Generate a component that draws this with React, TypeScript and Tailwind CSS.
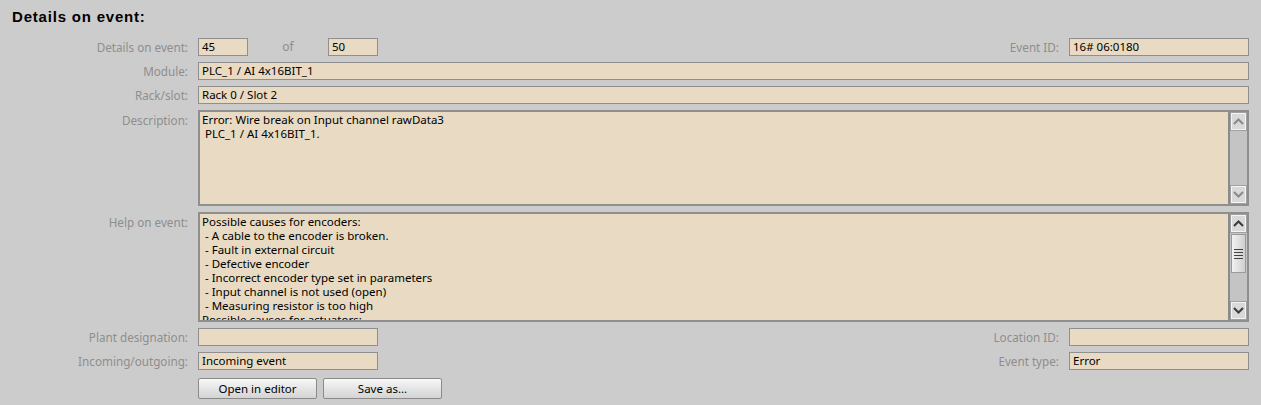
import React from "react";

const font = { fontFamily: '"Noto Sans", "Open Sans", sans-serif' };

function Label({ children, className = "" }: { children: React.ReactNode; className?: string }) {
  return (
    <div className={"text-[11.7px] leading-[18px] text-[#8e8e8e] text-right whitespace-nowrap " + className}>
      {children}
    </div>
  );
}

function Box({ children, className = "" }: { children?: React.ReactNode; className?: string }) {
  return (
    <div
      className={
        "h-[18px] border border-[#8f8f8f] bg-[#e8dac3] px-[3px] text-[11.5px] leading-[16px] text-black whitespace-nowrap overflow-hidden " +
        className
      }
    >
      {children}
    </div>
  );
}

function Chevron({ up, color }: { up: boolean; color: string }) {
  return (
    <svg width="11" height="7" viewBox="0 0 11 7">
      <path
        d={up ? "M1 6 L5.5 1.5 L10 6" : "M1 1 L5.5 5.5 L10 1"}
        fill="none"
        stroke={color}
        strokeWidth="2"
      />
    </svg>
  );
}

function SBtn({ up, disabled }: { up: boolean; disabled?: boolean }) {
  return (
    <div className="h-[17px] w-full shrink-0 border border-[#f4f4f4] bg-[#d9d9d9] flex items-center justify-center outline outline-1 outline-[#a0a0a0]">
      <Chevron up={up} color={disabled ? "#8a8a8a" : "#3c3c3c"} />
    </div>
  );
}

function Scrollbar({ thumb }: { thumb?: boolean }) {
  return (
    <div className="w-[19px] h-full border-l-2 border-[#8a8a8a] bg-[#c4c4c4] flex flex-col justify-between p-[1px]">
      <SBtn up disabled={!thumb} />
      {thumb ? (
        <div className="flex-1 flex flex-col mt-[2px] mb-[1px]">
          <div className="h-[39px] border border-[#9a9a9a] bg-gradient-to-r from-[#f2f2f2] to-[#cfcfcf] flex items-center justify-center">
            <div className="flex flex-col gap-[2px]">
              <div className="w-[9px] h-[1px] bg-[#404040]" />
              <div className="w-[9px] h-[1px] bg-[#404040]" />
              <div className="w-[9px] h-[1px] bg-[#404040]" />
              <div className="w-[9px] h-[1px] bg-[#404040]" />
            </div>
          </div>
          <div className="flex-1" />
        </div>
      ) : (
        <div className="flex-1" />
      )}
      <SBtn up={false} disabled={!thumb} />
    </div>
  );
}

function Area({ lines, h, thumb }: { lines: string[]; h: string; thumb?: boolean }) {
  return (
    <div className={"flex-1 flex border-2 border-[#8f8f8f] bg-[#e8dac3] overflow-hidden " + h}>
      <div className="flex-1 px-[2px] pt-[1px] text-[11.5px] leading-[14px] text-black overflow-hidden whitespace-pre">
        {lines.join("\n")}
      </div>
      <Scrollbar thumb={thumb} />
    </div>
  );
}

function Button({ children }: { children: React.ReactNode }) {
  return (
    <button className="w-[119px] h-[21px] border border-[#8a8a8a] rounded-[2px] bg-gradient-to-b from-[#f7f7f7] to-[#d4d4d4] text-[11.5px] leading-[18px] text-black">
      {children}
    </button>
  );
}

export default function App() {
  return (
    <div className="w-[1261px] h-[405px] bg-[#cccccc] overflow-hidden" style={font}>
      <div
        className="pl-[12px] pt-[8px] h-[38px] text-[15px] leading-[18px] font-bold text-black tracking-[0.8px]"
        style={{ fontFamily: '"Liberation Sans", Arial, sans-serif' }}
      >
        Details on event:
      </div>
      <div className="pr-[12px] flex flex-col gap-[6px]">
        <div className="flex items-center">
          <Label className="w-[188px]">Details on event:</Label>
          <div className="w-[10px]" />
          <Box className="w-[50px]">45</Box>
          <div className="w-[80px] text-center text-[12px] text-[#8e8e8e]">of</div>
          <Box className="w-[50px]">50</Box>
          <div className="flex-1" />
          <Label>Event ID:</Label>
          <div className="w-[10px]" />
          <Box className="w-[180px]">16# 06:0180</Box>
        </div>
        <div className="flex items-center">
          <Label className="w-[188px]">Module:</Label>
          <div className="w-[10px]" />
          <Box className="flex-1">PLC_1 / AI 4x16BIT_1</Box>
        </div>
        <div className="flex items-center">
          <Label className="w-[188px]">Rack/slot:</Label>
          <div className="w-[10px]" />
          <Box className="flex-1">Rack 0 / Slot 2</Box>
        </div>
        <div className="flex items-start">
          <Label className="w-[188px] pt-[1px]">Description:</Label>
          <div className="w-[10px]" />
          <Area
            h="h-[96px]"
            lines={["Error: Wire break on Input channel rawData3", " PLC_1 / AI 4x16BIT_1."]}
          />
        </div>
        <div className="flex items-start">
          <Label className="w-[188px] pt-[1px]">Help on event:</Label>
          <div className="w-[10px]" />
          <Area
            h="h-[110px]"
            thumb
            lines={[
              "Possible causes for encoders:",
              " - A cable to the encoder is broken.",
              " - Fault in external circuit",
              " - Defective encoder",
              " - Incorrect encoder type set in parameters",
              " - Input channel is not used (open)",
              " - Measuring resistor is too high",
              "Possible causes for actuators:",
            ]}
          />
        </div>
        <div className="flex items-center">
          <Label className="w-[188px]">Plant designation:</Label>
          <div className="w-[10px]" />
          <Box className="w-[180px]" />
          <div className="flex-1" />
          <Label>Location ID:</Label>
          <div className="w-[10px]" />
          <Box className="w-[180px]" />
        </div>
        <div className="flex items-center">
          <Label className="w-[188px]">Incoming/outgoing:</Label>
          <div className="w-[10px]" />
          <Box className="w-[180px]">Incoming event</Box>
          <div className="flex-1" />
          <Label>Event type:</Label>
          <div className="w-[10px]" />
          <Box className="w-[180px]">Error</Box>
        </div>
        <div className="flex items-center pt-[2px] gap-[6px] pl-[198px]">
          <Button>Open in editor</Button>
          <Button>Save as...</Button>
        </div>
      </div>
    </div>
  );
}
